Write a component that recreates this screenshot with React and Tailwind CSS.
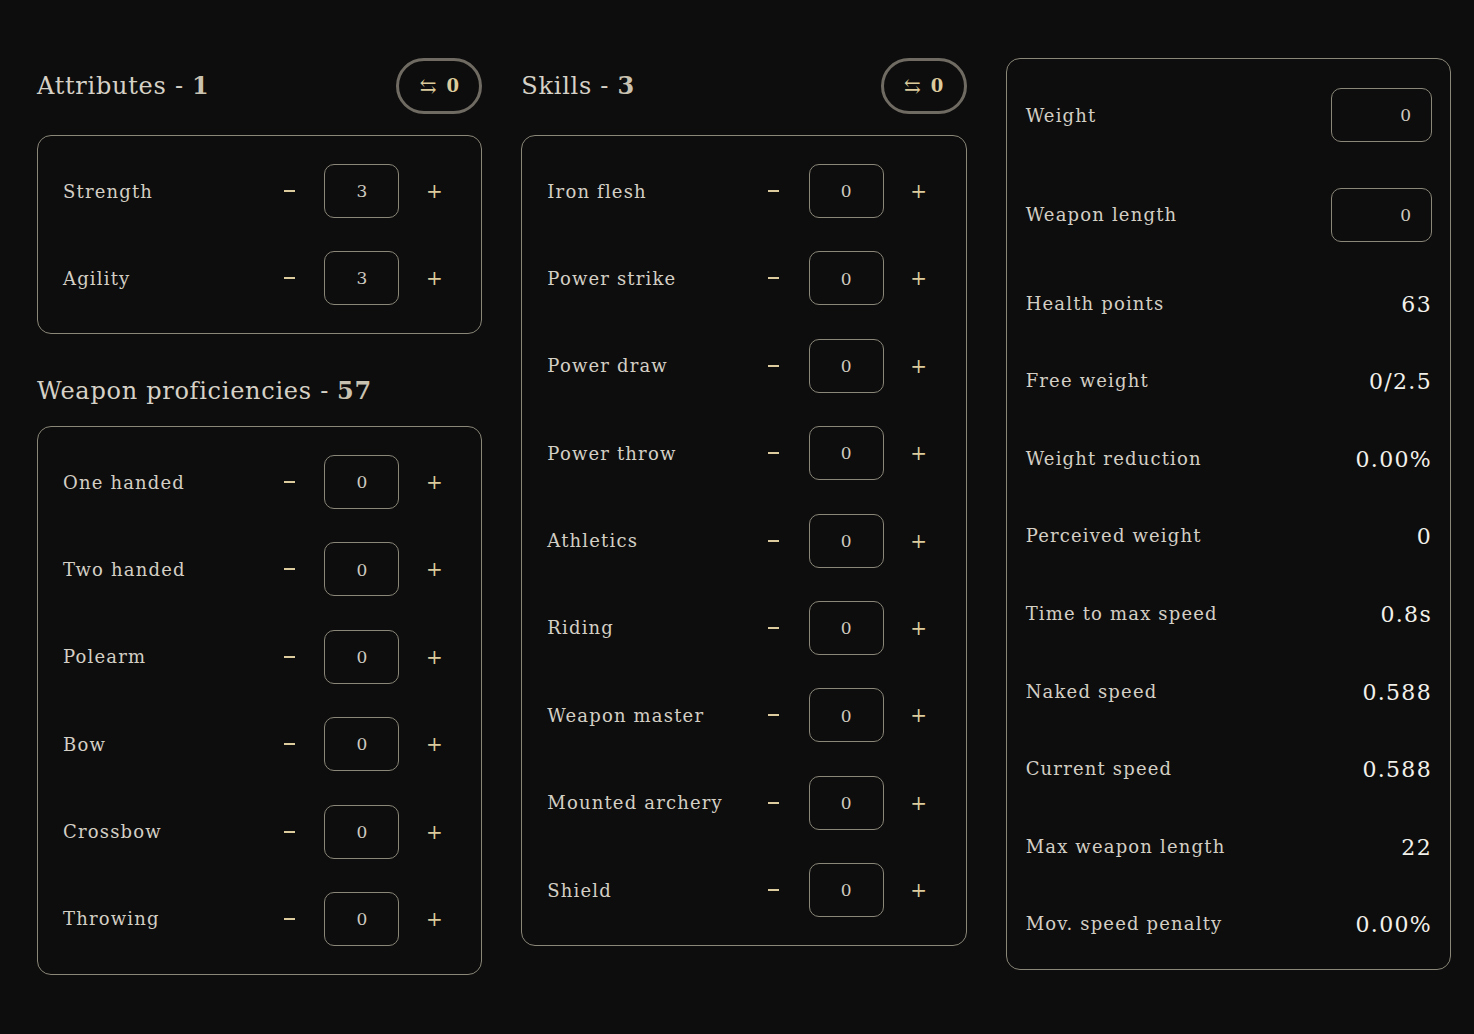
import React from 'react';

const attributes = [
  { name: 'Strength', value: 3 },
  { name: 'Agility', value: 3 },
];

const proficiencies = ['One handed', 'Two handed', 'Polearm', 'Bow', 'Crossbow', 'Throwing'];

const skills = [
  'Iron flesh',
  'Power strike',
  'Power draw',
  'Power throw',
  'Athletics',
  'Riding',
  'Weapon master',
  'Mounted archery',
  'Shield',
];

const stats = [
  { label: 'Health points', value: '63' },
  { label: 'Free weight', value: '0/2.5' },
  { label: 'Weight reduction', value: '0.00%' },
  { label: 'Perceived weight', value: '0' },
  { label: 'Time to max speed', value: '0.8s' },
  { label: 'Naked speed', value: '0.588' },
  { label: 'Current speed', value: '0.588' },
  { label: 'Max weapon length', value: '22' },
  { label: 'Mov. speed penalty', value: '0.00%' },
];

const font = { fontFamily: '"DejaVu Serif", "Liberation Serif", serif' };

const SectionHeader = ({ title, count, showReset }) => (
  <div className="flex items-center justify-between h-[56px]">
    <h2 className="text-[24px] tracking-[0.03em] text-[#d6d1c6]">
      {title} - <span className="font-bold text-[#c9c2b0]">{count}</span>
    </h2>
    {showReset && (
      <button className="flex items-center justify-center gap-[10px] w-[86px] h-[56px] rounded-full border-[3px] border-[#6f6b62] text-[#dccb9c]">
        <span className="text-[20px] leading-none">⇆</span>
        <span className="text-[18px] font-bold leading-none">0</span>
      </button>
    )}
  </div>
);

const CounterRow = ({ label, value }) => (
  <div className="flex items-center justify-between h-[54px]">
    <span className="text-[18px] tracking-[0.065em] text-[#d4cfc5]">{label}</span>
    <div className="flex items-center gap-[15px]">
      <button className="w-10 h-10 flex items-center justify-center">
        <span className="block w-[11px] h-[2px] bg-[#dccb9c]" />
      </button>
      <div className="w-[75px] h-[54px] rounded-[10px] border border-[#8a8678] flex items-center justify-center pt-[2px] text-[17px] text-[#cfcac0]">
        {value}
      </div>
      <button className="w-10 h-10 flex items-center justify-center text-[20px] text-[#dccb9c]">+</button>
    </div>
  </div>
);

const Card = ({ children, gap }) => (
  <div className={`rounded-[14px] border border-[#8a8678] pl-[25px] pr-[27px] py-[28px] flex flex-col ${gap}`}>
    {children}
  </div>
);

const App = () => {
  return (
    <div className="min-h-screen w-full bg-[#0d0d0d] pt-[58px] px-[37px]" style={font}>
      <div className="grid grid-cols-3 gap-x-[39px] w-[1414px]">
        <div className="flex flex-col">
          <SectionHeader title="Attributes" count="1" showReset />
          <div className="mt-[21px]">
            <Card gap="gap-[33px]">
              {attributes.map((a) => (
                <CounterRow key={a.name} label={a.name} value={a.value} />
              ))}
            </Card>
          </div>
          <div className="mt-[29px]">
            <h2 className="h-[56px] flex items-center text-[24px] tracking-[0.03em] text-[#d6d1c6]">
              Weapon proficiencies - <span className="ml-[8px] font-bold text-[#c9c2b0]">57</span>
            </h2>
          </div>
          <div className="mt-[7px]">
            <Card gap="gap-[33.4px]">
              {proficiencies.map((p) => (
                <CounterRow key={p} label={p} value={0} />
              ))}
            </Card>
          </div>
        </div>

        <div className="flex flex-col">
          <SectionHeader title="Skills" count="3" showReset />
          <div className="mt-[21px]">
            <Card gap="gap-[33.4px]">
              {skills.map((s) => (
                <CounterRow key={s} label={s} value={0} />
              ))}
            </Card>
          </div>
        </div>

        <div className="rounded-[14px] border border-[#8a8678] pl-[19px] pr-[18px] pt-[29px] pb-[29px] flex flex-col gap-[45.6px] self-start">
          {['Weight', 'Weapon length'].map((l) => (
            <div key={l} className="flex items-center justify-between h-[54px]">
              <span className="text-[18px] tracking-[0.065em] text-[#d4cfc5]">{l}</span>
              <div className="w-[101px] h-[54px] rounded-[10px] border border-[#8a8678] flex items-center justify-end pr-[20px] pt-[2px] text-[17px] text-[#cfcac0]">
                0
              </div>
            </div>
          ))}
          {stats.map((s) => (
            <div key={s.label} className="flex items-center justify-between h-[32px]">
              <span className="text-[18px] tracking-[0.065em] text-[#d4cfc5]">{s.label}</span>
              <span className="text-[22px] tracking-[0.06em] text-[#f2f0ea] pt-[2px]">{s.value}</span>
            </div>
          ))}
        </div>
      </div>
    </div>
  );
};

export default App;
